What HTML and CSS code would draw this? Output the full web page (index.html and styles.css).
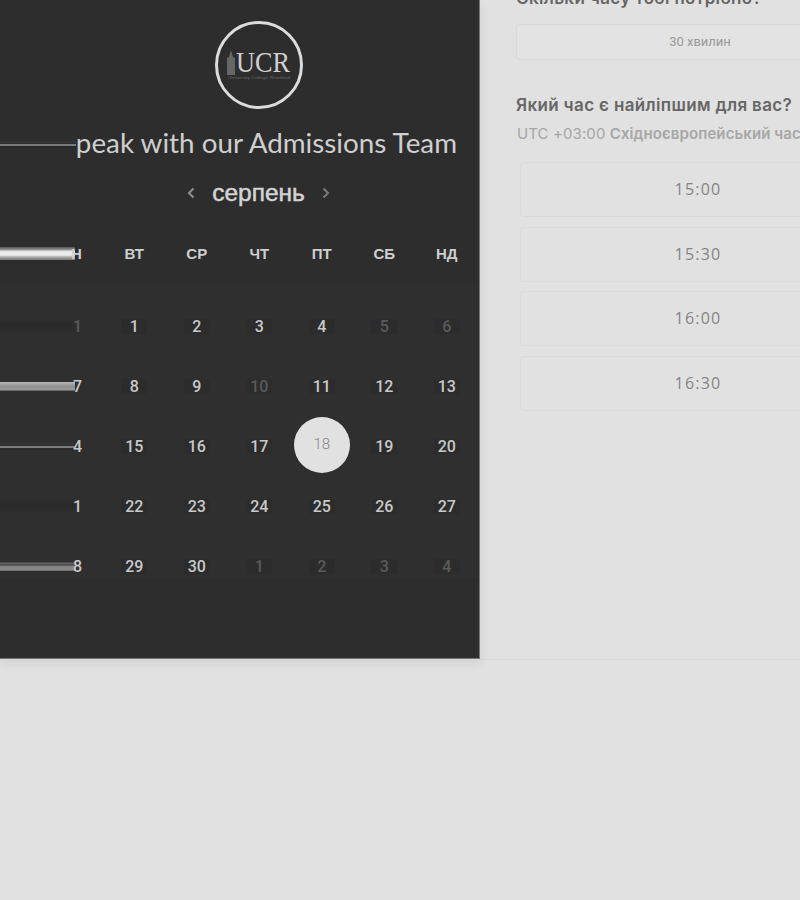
FILE: index.html
```html
<!DOCTYPE html>
<html lang="uk">
<head>
    <meta charset="UTF-8">
    <meta name="viewport" content="width=device-width, initial-scale=1.0">
    <title>Admissions</title>
    <link rel="stylesheet" href="styles.css">
</head>
<body>
    <div class="page">
        <section class="panel">
            <div class="logo-row">
                <svg class="logo" width="90" height="90" viewBox="0 0 90 90">
                    <circle cx="45" cy="45" r="42.5" fill="none" stroke="#dcdcdc" stroke-width="3"/>
                    <path d="M13 55V38l2-1 2-7 2 7 2 1v17z" fill="#666"/>
                    <text x="49" y="52" text-anchor="middle" class="logo-text" textLength="54" lengthAdjust="spacingAndGlyphs">UCR</text>
                    <text x="45" y="59" text-anchor="middle" class="logo-small" textLength="62" lengthAdjust="spacingAndGlyphs">University College Riverford</text>
                </svg>
            </div>

            <div class="title-row">
                <span class="smear smear-line"></span>
                <h1>peak with our Admissions Team</h1>
            </div>

            <div class="month-row">
                <svg width="10" height="14" viewBox="0 0 10 14"><path d="M7.5 2.5 3 7l4.5 4.5" fill="none" stroke="#8c8c8c" stroke-width="2.2"/></svg>
                <span class="month">серпень</span>
                <svg width="10" height="14" viewBox="0 0 10 14"><path d="M2.5 2.5 7 7l-4.5 4.5" fill="none" stroke="#767676" stroke-width="2.2"/></svg>
            </div>

            <div class="weekdays">
                <div class="first"><span class="smear smear-bright"></span><span class="cut-letter">Н</span></div>
                <div>ВТ</div>
                <div>СР</div>
                <div>ЧТ</div>
                <div>ПТ</div>
                <div>СБ</div>
                <div>НД</div>
            </div>

            <div class="dates">
                <div class="first"><span class="smear smear-dark"></span><b class="off">1</b></div>
                <div><b>1</b></div>
                <div><b>2</b></div>
                <div><b>3</b></div>
                <div><b>4</b></div>
                <div><b class="off">5</b></div>
                <div><b class="off">6</b></div>

                <div class="first"><span class="smear smear-thick"></span><b>7</b></div>
                <div><b>8</b></div>
                <div><b>9</b></div>
                <div><b class="off">10</b></div>
                <div><b>11</b></div>
                <div><b>12</b></div>
                <div><b>13</b></div>

                <div class="first"><span class="smear smear-line"></span><b>4</b></div>
                <div><b>15</b></div>
                <div><b>16</b></div>
                <div><b>17</b></div>
                <div><b class="today">18</b></div>
                <div><b>19</b></div>
                <div><b>20</b></div>

                <div class="first"><span class="smear smear-dark"></span><b>1</b></div>
                <div><b>22</b></div>
                <div><b>23</b></div>
                <div><b>24</b></div>
                <div><b>25</b></div>
                <div><b>26</b></div>
                <div><b>27</b></div>

                <div class="first"><span class="smear smear-mid"></span><b>8</b></div>
                <div><b>29</b></div>
                <div><b>30</b></div>
                <div><b class="off">1</b></div>
                <div><b class="off">2</b></div>
                <div><b class="off">3</b></div>
                <div><b class="off">4</b></div>
            </div>
        </section>

        <section class="side">
            <h2 class="top-heading">Скільки часу тобі потрібно?</h2>
            <div class="duration">30 хвилин</div>

            <h2 class="time-heading">Який час є найліпшим для вас?</h2>
            <p class="zone">UTC +03:00 <strong>Східноєвропейський час</strong></p>

            <div class="slots">
                <div class="slot">15:00</div>
                <div class="slot">15:30</div>
                <div class="slot">16:00</div>
                <div class="slot">16:30</div>
            </div>
        </section>
    </div>
</body>
</html>
```

FILE: styles.css
```css
body {
    margin: 0;
    background-color: #e1e1e1;
    font-family: "Liberation Sans", Arial, sans-serif;
    overflow: hidden;
}

.page {
    display: flex;
    width: 800px;
    height: 900px;
    overflow: hidden;
    align-items: flex-start;
}

/* dark calendar panel */
.panel {
    flex: none;
    box-sizing: border-box;
    width: 480px;
    height: 659px;
    padding-top: 20px;
    background-color: #2d2d2d;
    border-right: 1px solid #777;
    border-bottom: 1px solid #777;
    box-shadow: 0 4px 10px rgba(0, 0, 0, 0.08);
}

.logo-row {
    display: flex;
    justify-content: center;
    padding-left: 38px;
}

.logo {
    display: block;
}

.logo-text {
    font-family: "Liberation Serif", serif;
    font-size: 29px;
    fill: #cfcfcf;
}

.logo-small {
    font-family: "Liberation Sans", sans-serif;
    font-size: 4px;
    fill: #666;
}

.title-row {
    display: flex;
    align-items: center;
    height: 34px;
    margin-top: 16px;
    padding-right: 22px;
}

h1 {
    flex: none;
    margin: 0;
    font-family: Lato, sans-serif;
    font-size: 27.8px;
    font-weight: 400;
    color: #cfcfcf;
    line-height: 34px;
}

.month-row {
    display: flex;
    align-items: center;
    justify-content: center;
    gap: 16px;
    height: 34px;
    margin-top: 16px;
    padding-left: 38px;
}

.month {
    font-size: 24.5px;
    color: #d4d4d4;
    -webkit-text-stroke: 0.5px #d4d4d4;
}

/* streaks left over on the cut off left edge */
.smear {
    display: block;
    flex: none;
    width: 75px;
}

.title-row .smear {
    flex: 1;
    width: auto;
    margin-top: 3px;
}

.smear-line {
    height: 7px;
    background: linear-gradient(#2d2d2d 0, #383838 1px, #2d2d2d 2px, #2d2d2d 3px, #7a7a7a 3px, #7a7a7a 5px, #2d2d2d 5px, #262626 7px);
}

.smear-bright {
    height: 13px;
    background: linear-gradient(#555, #999 3px, #e6e6e6 4px, #f0f0f0 8px, #aaa 10px, #777 13px);
}

.smear-thick {
    height: 9px;
    background: linear-gradient(#bbb, #999 3px, #8c8c8c 6px, #aaa 7px, #555 9px);
}

.smear-mid {
    height: 9px;
    background: linear-gradient(#444, #6a6a6a 2px, #383838 3px, #7f7f7f 4px, #8c8c8c 8px, #555 9px);
}

.smear-dark {
    height: 12px;
    background: linear-gradient(#2d2d2d, #2a2a2a 6px, #2d2d2d 12px);
}

/* calendar grid */
.weekdays,
.dates {
    display: grid;
    grid-template-columns: 103px repeat(6, 62.5px);
    justify-items: center;
    align-items: center;
}

.weekdays {
    height: 30px;
    margin-top: 28px;
    font-size: 15px;
    font-weight: 700;
    color: #cfcfcf;
}

.cut-letter {
    margin-left: -4px;
}

.dates {
    grid-auto-rows: 24px;
    row-gap: 36px;
    height: 293px;
    box-sizing: border-box;
    margin-top: 17px;
    padding-top: 29px;
    background-color: #2f2f2f;
    font-family: Roboto, sans-serif;
    font-size: 16px;
    color: #c8c8c8;
}

.first {
    display: flex;
    align-items: center;
    justify-self: start;
    width: 103px;
}

.dates b {
    display: flex;
    flex: none;
    align-items: center;
    justify-content: center;
    min-width: 24px;
    height: 15px;
    padding: 0 1px;
    font-weight: 500;
    background-color: #2c2c2c;
}

.dates .first b {
    min-width: 0;
    margin-left: -2px;
    padding: 0;
    background: none;
}

.dates .off {
    color: #5a5a5a;
}

.dates .today {
    width: 56px;
    height: 56px;
    margin-top: -2px;
    padding: 0 0 2px;
    box-sizing: border-box;
    border-radius: 50%;
    background-color: #e1e1e1;
    color: #858585;
    font-size: 15px;
    font-weight: 300;
}

/* right column */
.side {
    flex: none;
    box-sizing: border-box;
    width: 400px;
    height: 660px;
    padding-left: 36px;
    border-bottom: 1px solid #d6d6d6;
}

h2 {
    margin: 0;
    font-family: Inter, sans-serif;
    font-size: 17px;
    line-height: 20px;
    letter-spacing: 0.35px;
    font-weight: 600;
    color: #666;
    white-space: nowrap;
}

.top-heading {
    margin-top: -12px;
}

.duration {
    box-sizing: border-box;
    width: 368px;
    height: 36px;
    margin-top: 16px;
    border: 1px solid #d8d8d8;
    border-radius: 4px;
    background-color: #e3e3e3;
    font-family: Roboto, sans-serif;
    font-size: 13px;
    line-height: 34px;
    text-align: center;
    color: #999;
}

.time-heading {
    margin-top: 35px;
}

.zone {
    margin: 10px 0 0 1px;
    font-family: Inter, sans-serif;
    font-size: 15px;
    line-height: 18px;
    letter-spacing: 0.1px;
    color: #a6a6a6;
    white-space: nowrap;
}

.zone strong {
    font-weight: 600;
}

.slots {
    display: flex;
    flex-direction: column;
    gap: 9.5px;
    width: 356px;
    margin: 19px 0 0 4px;
}

.slot {
    box-sizing: border-box;
    height: 55px;
    border: 1px solid #dadada;
    border-radius: 4px;
    font-family: "Open Sans", sans-serif;
    font-size: 16px;
    letter-spacing: 1.2px;
    line-height: 53px;
    text-align: center;
    color: #858585;
}
```
